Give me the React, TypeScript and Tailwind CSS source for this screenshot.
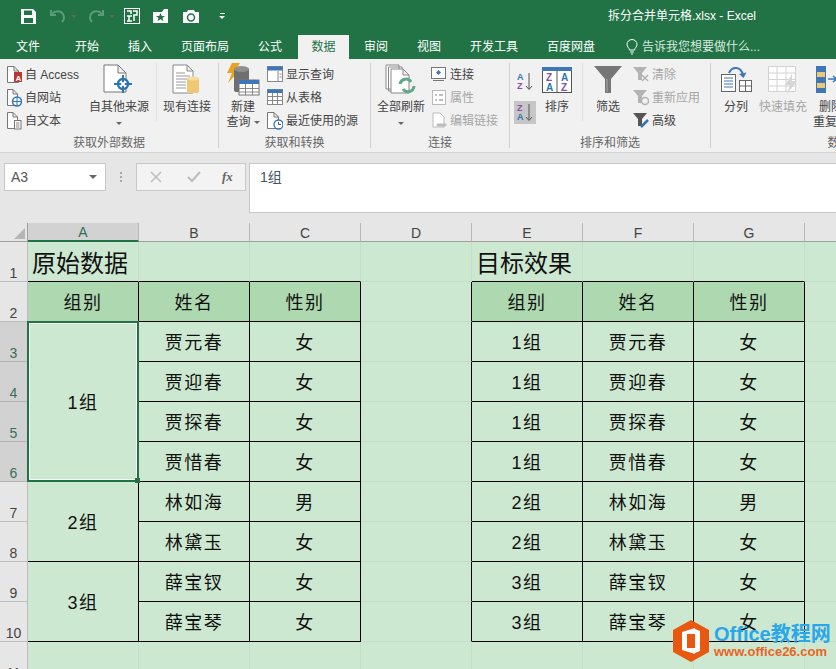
import React from "react";

const CJK = "font-['Liberation_Sans','Noto_Sans_CJK_SC',sans-serif]";

// ---------- ribbon icons ----------
const Page = ({ x = 0, w = 14, h = 17 }: { x?: number; w?: number; h?: number }) => (
  <path
    d={`M${x + 0.5} 0.5H${x + w - 5}L${x + w - 0.5} 5V${h - 0.5}H${x + 0.5}Z M${x + w - 5} 0.5V5H${x + w - 0.5}`}
    fill="#fff"
    stroke="#777"
  />
);

const IcoAccess = () => (
  <svg width="15" height="18">
    <Page w={12} />
    <rect x="7" y="6" width="8" height="10" fill="#b7372e" />
    <text x="8.5" y="14.5" fontSize="8" fontWeight="700" fill="#fff" fontFamily="Liberation Sans">A</text>
  </svg>
);
const IcoWeb = () => (
  <svg width="15" height="18">
    <Page w={11} />
    <circle cx="10" cy="12.5" r="4.5" fill="#fff" stroke="#2e75b6" strokeWidth="1.5" />
    <path d="M5.5 12.5H14.5M10 8V17" stroke="#2e75b6" />
  </svg>
);
const IcoText = () => (
  <svg width="15" height="18">
    <Page w={11} />
    <rect x="7.5" y="8.5" width="6.5" height="8.5" fill="#fff" stroke="#777" />
    <path d="M9 11H12.5M9 13H12.5M9 15H12.5" stroke="#888" />
  </svg>
);
const IcoOther = () => (
  <svg width="32" height="32">
    <path d="M1 1H15L23 9V28H1Z M15 1V9H23" fill="#fff" stroke="#777" />
    <circle cx="20" cy="20" r="5" fill="#fff" stroke="#2e75b6" strokeWidth="2.5" />
    <path d="M20 11V29M11 20H29" stroke="#2e75b6" strokeWidth="2" />
    <circle cx="20" cy="20" r="2" fill="#fff" />
  </svg>
);
const IcoExisting = () => (
  <svg width="30" height="32">
    <path d="M1 1H15L21 7V29H1Z M15 1V7H21" fill="#fff" stroke="#888" />
    <path d="M4 9H13M4 12H18M4 15H18M4 18H14M4 21H14M4 24H14" stroke="#999" />
    <rect x="15" y="14" width="12" height="15" rx="2" fill="#eec872" />
    <ellipse cx="21" cy="14.5" rx="6" ry="2" fill="#f5dc9f" />
  </svg>
);
const IcoQuery = () => (
  <svg width="34" height="34">
    <path d="M6 0H14L9 8H13L2 20L6 10H1Z" fill="#eba31f" />
    <rect x="8" y="5" width="15" height="24" rx="2" fill="#6f6f6f" />
    <ellipse cx="15.5" cy="6" rx="7.5" ry="3" fill="#909090" />
    <rect x="13" y="17" width="20" height="15" fill="#fff" stroke="#777" />
    <rect x="13" y="17" width="20" height="4" fill="#3f76b8" />
    <path d="M13 25.5H33M13 29H33M19.5 21V32M26.5 21V32" stroke="#888" />
  </svg>
);
const IcoShowQuery = () => (
  <svg width="17" height="17">
    <rect x="0.5" y="0.5" width="15" height="15" fill="#fff" stroke="#888" />
    <rect x="0.5" y="0.5" width="15" height="4" fill="#3f76b8" />
    <path d="M11 5V15M12.5 8H14.5M12.5 11H14.5" stroke="#888" />
  </svg>
);
const IcoFromTable = () => (
  <svg width="17" height="17">
    <rect x="0.5" y="0.5" width="15" height="15" fill="#fff" stroke="#888" />
    <rect x="0.5" y="0.5" width="15" height="3.5" fill="#3f76b8" />
    <path d="M0.5 7.5H15.5M0.5 11.5H15.5M5.5 4V15.5M10.5 4V15.5" stroke="#888" />
  </svg>
);
const IcoRecent = () => (
  <svg width="17" height="18">
    <Page w={12} />
    <circle cx="11.5" cy="12.5" r="4.5" fill="#fff" stroke="#2e75b6" strokeWidth="1.3" />
    <path d="M11.5 10V12.5H14" fill="none" stroke="#555" />
  </svg>
);
const IcoRefresh = () => (
  <svg width="32" height="32">
    <path d="M1 1H14V25H1Z M3.5 3H17V27H3.5Z" fill="#fff" stroke="#888" />
    <path d="M6 5H18L24 11V29H6Z M18 5V11H24" fill="#fff" stroke="#888" />
    <path d="M15 20A6 6 0 0 1 26 18M29 22A6 6 0 0 1 18 25" fill="none" stroke="#5fa98a" strokeWidth="3" />
  </svg>
);
const IcoConn = () => (
  <svg width="16" height="15">
    <rect x="0.5" y="0.5" width="14" height="11" fill="#fff" stroke="#777" />
    <path d="M7.5 3L10 5.5L7.5 8L5 5.5Z" fill="#3f76b8" />
    <path d="M2 13.5H13" stroke="#777" />
  </svg>
);
const IcoProps = () => (
  <svg width="15" height="16">
    <rect x="0.5" y="0.5" width="13" height="14" fill="#fff" stroke="#bbb" />
    <path d="M3 5H5M3 10H5M7 5H11M7 10H11" stroke="#aaa" strokeWidth="1.5" />
  </svg>
);
const IcoEditLink = () => (
  <svg width="15" height="17">
    <path d="M1 1H8L12 5V15H1Z" fill="#fff" stroke="#bbb" />
    <path d="M6 13H13" stroke="#bbb" strokeWidth="3" strokeLinecap="round" fill="none" />
  </svg>
);
const IcoAZ = ({ flip, hot }: { flip?: boolean; hot?: boolean }) => (
  <div className={`w-[22px] h-[23px] flex items-center justify-center ${hot ? "bg-[#c6c6c6]" : ""}`}>
    <svg width="16" height="19" fontFamily="Liberation Sans" fontWeight="700" fontSize="9">
      <text x="0" y="8" fill={flip ? "#8a4fa8" : "#2e75b6"}>{flip ? "Z" : "A"}</text>
      <text x="0" y="17" fill={flip ? "#2e75b6" : "#8a4fa8"}>{flip ? "A" : "Z"}</text>
      <path d="M12 1V17M9 14L12 17.5L15 14" fill="none" stroke="#555" />
    </svg>
  </div>
);
const IcoSort = () => (
  <svg width="30" height="26" fontFamily="Liberation Sans" fontWeight="700" fontSize="10">
    <rect x="0.5" y="0.5" width="29" height="25" fill="#fff" stroke="#555" />
    <rect x="0" y="0" width="30" height="4" fill="#3f76b8" />
    <path d="M15 4V26" stroke="#555" />
    <text x="4" y="14" fill="#8a4fa8">Z</text>
    <text x="4" y="24" fill="#2e75b6">A</text>
    <text x="19" y="14" fill="#2e75b6">A</text>
    <text x="19" y="24" fill="#8a4fa8">Z</text>
  </svg>
);
const IcoFilter = () => (
  <svg width="28" height="28">
    <path d="M0 0H28L17 13V27H11V13Z" fill="#767676" />
    <path d="M13 13V26" stroke="#aaa" />
  </svg>
);
const SmallFunnel = ({ color, children }: { color: string; children?: React.ReactNode }) => (
  <svg width="17" height="17">
    <path d="M0 1H14L9 7V14H5V7Z" fill={color} />
    {children}
  </svg>
);
const IcoSplit = () => (
  <svg width="31" height="27">
    <rect x="0.5" y="8.5" width="14" height="17" fill="#fff" stroke="#666" />
    <path d="M3 12H12M3 15H12M3 18H12M3 21H12" stroke="#3f76b8" />
    <rect x="18.5" y="14.5" width="12" height="11" fill="#fff" stroke="#666" />
    <path d="M18.5 20H30.5M24.5 14.5V25.5" stroke="#666" />
    <path d="M8 7C11 0 20 0 22 9" fill="none" stroke="#3f76b8" strokeWidth="2" />
    <path d="M18 8L22.5 12L25.5 6.5Z" fill="#3f76b8" />
  </svg>
);
const IcoFill = () => (
  <svg width="30" height="28">
    <rect x="0.5" y="0.5" width="27" height="25" fill="#fff" stroke="#d2d2d2" />
    <path d="M0.5 7H27.5M0.5 13.5H27.5M0.5 20H27.5M9 0.5V25.5M18 0.5V25.5" stroke="#d2d2d2" />
    <path d="M24 8L17 19H22L19 28L29 15H24Z" fill="#d6d6d6" />
  </svg>
);
const IcoRemoveDup = () => (
  <svg width="30" height="27">
    <rect x="0" y="0" width="10" height="27" fill="#3f76b8" />
    <rect x="1" y="6" width="8" height="5" fill="#eec872" />
    <rect x="1" y="17" width="8" height="5" fill="#eec872" />
    <path d="M12 13H20M17 10L20.5 13L17 16" fill="none" stroke="#3f76b8" strokeWidth="1.5" />
  </svg>
);

// ---------- ribbon pieces ----------
const Caret = ({ className = "" }: { className?: string }) => (
  <span className={`inline-block w-0 h-0 border-x-[3px] border-x-transparent border-t-[3px] border-t-[#666] ${className}`} />
);

const Small = ({ icon, label, muted, w = 16 }: { icon: React.ReactNode; label: string; muted?: boolean; w?: number }) => (
  <div className={`h-[23px] flex items-center text-[12px] whitespace-nowrap ${muted ? "text-[#a6a6a6]" : "text-[#444]"}`}>
    <div className="flex justify-center shrink-0 mr-[3px]" style={{ width: w }}>{icon}</div>
    {label}
  </div>
);

const Big = ({ icon, lines, caret, w, muted }: { icon: React.ReactNode; lines: string[]; caret?: boolean; w: number; muted?: boolean }) => (
  <div className={`flex flex-col items-center text-[12px] leading-[15px] shrink-0 whitespace-nowrap ${muted ? "text-[#a6a6a6]" : "text-[#444]"}`} style={{ width: w }}>
    <div className="h-[33px] flex items-center justify-center">{icon}</div>
    <div className="mt-[4px]">{lines[0]}</div>
    {lines[1] && <div>{lines[1]}{caret && <Caret className="ml-[3px] mb-[2px]" />}</div>}
    {!lines[1] && caret && <Caret className="mt-[7px]" />}
  </div>
);

const Group = ({ label, w, children }: { label: string; w: number; children: React.ReactNode }) => (
  <div className="mt-[4px] h-[85px] flex flex-col shrink-0 border-r border-[#d0d0d0]" style={{ width: w }}>
    <div className="h-[74px] flex">{children}</div>
    <div className="h-[11px] leading-[13px] text-[12px] text-[#666] text-center whitespace-nowrap">{label}</div>
  </div>
);

const Sep = () => <div className="w-px h-[58px] bg-[#e0e0e0] shrink-0" />;

const tabs = [
  { t: "文件", w: 59 },
  { t: "开始", w: 53 },
  { t: "插入", w: 53 },
  { t: "页面布局", w: 77 },
  { t: "公式", w: 40 },
];
const tabs2 = [
  { t: "审阅", w: 53 },
  { t: "视图", w: 53 },
  { t: "开发工具", w: 77 },
  { t: "百度网盘", w: 78 },
];

// ---------- sheet data ----------
const people = [
  { n: 3, name: "贾元春", sex: "女", group: "1组" },
  { n: 4, name: "贾迎春", sex: "女", group: "1组" },
  { n: 5, name: "贾探春", sex: "女", group: "1组" },
  { n: 6, name: "贾惜春", sex: "女", group: "1组" },
  { n: 7, name: "林如海", sex: "男", group: "2组" },
  { n: 8, name: "林黛玉", sex: "女", group: "2组" },
  { n: 9, name: "薛宝钗", sex: "女", group: "3组" },
  { n: 10, name: "薛宝琴", sex: "女", group: "3组" },
];

const Plain = ({ right, children }: { right?: boolean; children?: React.ReactNode }) => (
  <div className={`border-r border-b border-b-[#c2dec7] ${right ? "border-r-black" : "border-r-[#c2dec7]"}`}>{children}</div>
);
const Box = ({ head, children, className = "" }: { head?: boolean; children?: React.ReactNode; className?: string }) => (
  <div className={`border-r border-b border-black flex items-center justify-center pt-[3px] text-[18px] tracking-[1.5px] text-[#111] ${head ? "bg-[#aed9b0]" : ""} ${className}`}>
    {children}
  </div>
);
const RowHead = ({ n, active }: { n: number; active?: boolean }) => (
  <div className={`border-b border-r flex items-end justify-center pb-[1px] text-[14px] leading-[14px] ${active ? "bg-[#d2d2d2] border-[#b4b4b4] text-[#33705a]" : "bg-[#e6e6e6] border-[#bdbdbd] text-[#444]"}`}>
    {n}
  </div>
);
const ColHead = ({ c, active }: { c: string; active?: boolean }) => (
  <div className={`flex items-center justify-center pt-[1px] text-[14px] leading-none border-r border-r-[#b8b8b8] ${active ? "bg-[#d2d2d2] text-[#33705a] border-b-2 border-b-[#217346]" : "border-b border-b-[#a0a0a0] text-[#444]"}`}>
    {c}
  </div>
);

export default function App() {
  return (
    <div className={`relative w-[836px] h-[669px] overflow-hidden bg-[#cde8d0] ${CJK}`}>
      {/* title bar */}
      <div className="h-[35px] bg-[#217346] flex items-center pb-[3px] text-white">
        <div className="flex items-center pl-[21px]">
          <svg width="15" height="15" viewBox="0 0 15 15">
            <path d="M0 0H12L15 3V15H0Z" fill="#fff" />
            <rect x="3" y="1.5" width="8" height="4.5" fill="#217346" />
            <rect x="3" y="9" width="9" height="5" fill="#217346" />
          </svg>
          <svg className="ml-[14px]" width="16" height="14" viewBox="0 0 16 14">
            <path d="M2 5C6 0 14 2 14 9C14 11 13 12 12 13M1 1V6H6" fill="none" stroke="#5d9a7c" strokeWidth="2" />
          </svg>
          <Caret className="ml-[5px] border-t-[#5d9a7c]" />
          <svg className="ml-[11px]" width="16" height="14" viewBox="0 0 16 14">
            <path d="M14 5C10 0 2 2 2 9C2 11 3 12 4 13M15 1V6H10" fill="none" stroke="#5d9a7c" strokeWidth="2" />
          </svg>
          <Caret className="ml-[5px] border-t-[#5d9a7c]" />
          <svg className="ml-[9px]" width="16" height="16" viewBox="0 0 16 16">
            <rect x="0.5" y="0.5" width="15" height="15" fill="none" stroke="#fff" />
            <path d="M3 3H7V6M9 3H13V7H10V13M3 8H8M5 8V13M3 13H8" fill="none" stroke="#fff" strokeWidth="1.5" />
          </svg>
          <svg className="ml-[13px]" width="16" height="14" viewBox="0 0 16 14">
            <path d="M0 3H9L11 0H15V14H0Z" fill="#fff" />
            <path d="M7.5 4L8.8 7H12L9.5 9L10.4 12L7.5 10.2L4.6 12L5.5 9L3 7H6.2Z" fill="#217346" />
          </svg>
          <svg className="ml-[14px]" width="16" height="13" viewBox="0 0 16 13">
            <path d="M0 2H4L5 0H11L12 2H16V13H0Z" fill="#fff" />
            <circle cx="8" cy="7.5" r="3.5" fill="none" stroke="#217346" strokeWidth="1.5" />
          </svg>
          <div className="ml-[20px] flex flex-col items-center gap-[2px]">
            <div className="w-[5px] h-px bg-white" />
            <Caret className="border-t-white" />
          </div>
        </div>
        <div className="ml-auto mr-[80px] text-[12px]">拆分合并单元格.xlsx - Excel</div>
      </div>

      {/* tabs */}
      <div className="h-[24px] bg-[#217346] flex items-center text-white text-[12px] whitespace-nowrap pl-[16px]">
        {tabs.map((t) => (
          <div key={t.t} style={{ width: t.w }} className="shrink-0">{t.t}</div>
        ))}
        <div className="w-[51px] h-full bg-[#f1f1f1] text-[#217346] flex items-center justify-center shrink-0 mr-[15px]">数据</div>
        {tabs2.map((t) => (
          <div key={t.t} style={{ width: t.w }} className="shrink-0">{t.t}</div>
        ))}
        <svg width="12" height="16" viewBox="0 0 12 16" className="ml-[1px] mr-[4px]">
          <path d="M3.5 11C3 8.5 1 8 1 5.5A5 5 0 0 1 11 5.5C11 8 9 8.5 8.5 11ZM4 13H8M5 15H7" fill="none" stroke="#fff" />
        </svg>
        <div className="text-[#d9e8df]">告诉我您想要做什么...</div>
      </div>

      {/* ribbon */}
      <div className="h-[94px] bg-[#f1f1f1] border-b border-[#d4d4d4] flex overflow-hidden">
        <Group label="获取外部数据" w={219}>
          <div className="w-[89px] pl-[7px] shrink-0">
            <Small w={15} icon={<IcoAccess />} label="自 Access" />
            <Small w={15} icon={<IcoWeb />} label="自网站" />
            <Small w={15} icon={<IcoText />} label="自文本" />
          </div>
          <Big icon={<IcoOther />} lines={["自其他来源"]} caret w={60} />
          <div className="w-[7px] shrink-0" />
          <Sep />
          <Big icon={<IcoExisting />} lines={["现有连接"]} w={60} />
        </Group>
        <Group label="获取和转换" w={152}>
          <Big icon={<IcoQuery />} lines={["新建", "查询"]} caret w={48} />
          <div className="shrink-0">
            <Small icon={<IcoShowQuery />} label="显示查询" />
            <Small icon={<IcoFromTable />} label="从表格" />
            <Small icon={<IcoRecent />} label="最近使用的源" />
          </div>
        </Group>
        <Group label="连接" w={139}>
          <Big icon={<IcoRefresh />} lines={["全部刷新"]} caret w={60} />
          <div className="shrink-0">
            <Small icon={<IcoConn />} label="连接" />
            <Small icon={<IcoProps />} label="属性" muted />
            <Small icon={<IcoEditLink />} label="编辑链接" muted />
          </div>
        </Group>
        <Group label="排序和筛选" w={201}>
          <div className="w-[27px] pl-[4px] pt-[7px] shrink-0 flex flex-col gap-[8px]">
            <IcoAZ />
            <IcoAZ flip hot />
          </div>
          <Big icon={<IcoSort />} lines={["排序"]} w={40} />
          <div className="w-[5px] shrink-0" />
          <Sep />
          <Big icon={<IcoFilter />} lines={["筛选"]} w={50} />
          <div className="shrink-0">
            <Small muted w={16} label="清除" icon={<SmallFunnel color="#b3b3b3"><path d="M9 9L15 15M15 9L9 15" stroke="#b3b3b3" strokeWidth="1.5" /></SmallFunnel>} />
            <Small muted w={16} label="重新应用" icon={<SmallFunnel color="#b3b3b3"><circle cx="12" cy="12" r="3.5" fill="none" stroke="#b3b3b3" strokeWidth="1.5" /></SmallFunnel>} />
            <Small w={16} label="高级" icon={<SmallFunnel color="#555"><path d="M8 15L15 8" stroke="#2e75b6" strokeWidth="2.5" /></SmallFunnel>} />
          </div>
        </Group>
        <Group label="数据工具" w={282}>
          <Big icon={<IcoSplit />} lines={["分列"]} w={50} />
          <Big icon={<IcoFill />} lines={["快速填充"]} w={44} muted />
          <div className="pl-[8px] shrink-0">
            <Big icon={<IcoRemoveDup />} lines={["删除", "重复项"]} w={36} />
          </div>
        </Group>
      </div>

      {/* formula bar */}
      <div className="h-[70px] bg-[#e6e6e6] flex items-start pt-[10px] pl-[4px]">
        <div className="w-[102px] h-[28px] bg-white border border-[#c8c8c8] flex items-center justify-between pl-[6px] pr-[8px] text-[14px] text-[#555]">
          A3
          <Caret className="border-x-[4px] border-t-[4px]" />
        </div>
        <div className="w-[30px] h-[28px] flex flex-col items-center justify-center gap-[2px]">
          <div className="w-[2px] h-[2px] bg-[#a8a8a8]" />
          <div className="w-[2px] h-[2px] bg-[#a8a8a8]" />
          <div className="w-[2px] h-[2px] bg-[#a8a8a8]" />
        </div>
        <div className="w-[110px] h-[28px] bg-[#f3f3f3] border border-[#c8c8c8] flex items-center pl-[13px]">
          <svg width="12" height="12" viewBox="0 0 12 12"><path d="M1 1L11 11M11 1L1 11" stroke="#bdbdbd" strokeWidth="1.5" /></svg>
          <svg className="ml-[25px]" width="14" height="12" viewBox="0 0 14 12"><path d="M1 6L5 10L13 1" fill="none" stroke="#bdbdbd" strokeWidth="2" /></svg>
          <span className="ml-[21px] text-[13px] italic font-bold font-['Liberation_Serif',serif] text-[#666]">fx</span>
        </div>
        <div className="ml-[3px] flex-1 h-[50px] bg-white border-l border-b border-t border-[#c8c8c8] pl-[10px] pt-[3px] text-[14px] text-[#44546a]">1组</div>
      </div>

      {/* sheet */}
      <div className="grid grid-cols-[28px_111px_111px_111px_111px_111px_111px_111px_111px] grid-rows-[19px_repeat(11,40px)]">
        <div className="bg-[#e6e6e6] border-b border-r border-[#a0a0a0] flex items-end justify-end pr-[2px] pb-[2px]">
          <div className="w-0 h-0 border-l-[11px] border-l-transparent border-b-[11px] border-b-[#b5b5b5]" />
        </div>
        {["A", "B", "C", "D", "E", "F", "G", "H"].map((c) => (
          <div key={c} className="bg-[#e6e6e6] grid">
            {c === "H" ? <ColHead c="H" /> : <ColHead c={c} active={c === "A"} />}
          </div>
        ))}

        {/* row 1 */}
        <RowHead n={1} />
        <div className="border-r border-b border-r-[#c2dec7] border-b-black flex items-center pl-[4px] pt-[4px] text-[24px] text-[#111]">原始数据</div>
        <div className="border-r border-b border-r-[#c2dec7] border-b-black" />
        <div className="border-r border-b border-r-[#c2dec7] border-b-black" />
        <Plain />
        <div className="border-r border-b border-r-[#c2dec7] border-b-black flex items-center pl-[4px] pt-[4px] text-[24px] text-[#111]">目标效果</div>
        <div className="border-r border-b border-r-[#c2dec7] border-b-black" />
        <div className="border-r border-b border-r-[#c2dec7] border-b-black" />
        <Plain />

        {/* row 2 */}
        <RowHead n={2} />
        <Box head>组别</Box>
        <Box head>姓名</Box>
        <Box head>性别</Box>
        <Plain right />
        <Box head>组别</Box>
        <Box head>姓名</Box>
        <Box head>性别</Box>
        <Plain />

        {/* rows 3-10 */}
        {people.map((p) => (
          <React.Fragment key={p.n}>
            <RowHead n={p.n} active={p.n <= 6} />
            {p.n === 3 && (
              <Box className="row-span-4 relative">
                1组
                <div className="absolute -left-px -top-px -right-px -bottom-px border-2 border-[#217346]">
                  <div className="w-full h-full border border-white" />
                  <div className="absolute -right-[3px] -bottom-[3px] w-[5px] h-[5px] bg-[#217346]" />
                </div>
              </Box>
            )}
            {p.n === 7 && <Box className="row-span-2">2组</Box>}
            {p.n === 9 && <Box className="row-span-2">3组</Box>}
            <Box>{p.name}</Box>
            <Box>{p.sex}</Box>
            <Plain right />
            <Box>{p.group}</Box>
            <Box>{p.name}</Box>
            <Box>{p.sex}</Box>
            <Plain />
          </React.Fragment>
        ))}

        {/* row 11 */}
        <RowHead n={11} />
        <Plain /><Plain /><Plain /><Plain /><Plain /><Plain /><Plain /><Plain />
      </div>

      {/* watermark */}
      <div className="absolute left-[673px] top-[620px] flex items-center">
        <svg width="36" height="42" viewBox="0 0 36 42">
          <path d="M18 0L36 10V32L18 42L0 32V10Z" fill="#e8590f" />
          <path d="M9 12L22 8V34L9 30Z" fill="#fff" />
          <path d="M14 14H22V28H14Z" fill="#e8590f" />
          <path d="M22 9L27 11V31L22 33Z" fill="#fff" />
        </svg>
        <div className="ml-[5px] font-bold leading-none whitespace-nowrap">
          <div className="text-[20px] text-[#2aa7ea]">Office教程网</div>
          <div className="text-[13px] text-[#e8651f] mt-[1px]">www.office26.com</div>
        </div>
      </div>
    </div>
  );
}
